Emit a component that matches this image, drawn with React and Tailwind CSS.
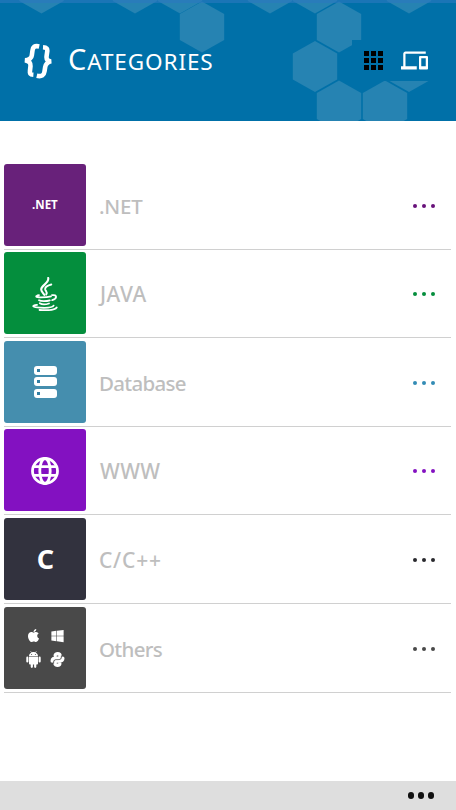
import { FaApple, FaWindows } from 'react-icons/fa'
import { MdDevices } from 'react-icons/md'

// centre points of the header honeycomb
const hexagons = [
  [41.5, -12], [135, -12], [180, -12], [202, 27],
  [270, -12], [315, -12], [409, -12],
  [339, 27], [315, 66.5], [339, 106], [385, 106], [409, 66.5],
]

function Honeycomb() {
  return (
    <svg className="absolute inset-0" width="456" height="121" viewBox="0 0 456 121">
      {hexagons.map(([x, y]) => (
        <polygon
          key={`${x}-${y}`}
          fill="#2683b2"
          points={`${x},${y - 25.5} ${x + 22.2},${y - 13} ${x + 22.2},${y + 13} ${x},${y + 25.5} ${x - 22.2},${y + 13} ${x - 22.2},${y - 13}`}
        />
      ))}
      <rect x="352" y="40" width="84" height="41" fill="#0070a8" />
      <rect width="456" height="3" fill="#2b78c0" opacity="0.6" />
    </svg>
  )
}

function Braces() {
  return (
    <svg width="28" height="36" viewBox="0 0 28 36" fill="none" stroke="#fff" strokeWidth="4.6">
      <path d="M15.2 3.4C10.5 2.4 9 4 8.5 7.5L7.8 12.5C7.5 15 6 16.7 1.2 17.3C5.5 18.5 6.8 20 6.5 23L6 27.5C5.6 30.5 6 31.6 9.4 31.8" />
      <path d="M19 4.2C22.8 4.4 23.6 5.8 23.2 8.8L22.6 13C22.2 16 23 17.8 27 18.4C23.2 19.4 21.6 21 21.2 24L20.5 28.5C20 32 18 34 12.8 32.8" />
    </svg>
  )
}

function Grid() {
  return (
    <div className="grid grid-cols-3 gap-[2px]">
      {[...Array(9).keys()].map((i) => (
        <div key={i} className="h-[5px] w-[5px] bg-black" />
      ))}
    </div>
  )
}

function Java() {
  return (
    <svg className="mt-[1px]" width="26" height="34" viewBox="0 0 26 34" fill="none" stroke="#fff" strokeLinecap="round">
      <path strokeWidth="2.1" d="M16.2 1C17.5 6 9 8.5 9.2 12.5C9.3 14.5 11 15.8 12.3 17.8" />
      <path strokeWidth="1.9" d="M19.3 7.5C15.5 8.5 12.8 10.5 13.2 12.5C13.6 14.2 15.8 14.5 14.2 17.6" />
      <path strokeWidth="1.7" d="M7 18.2C2.5 19 3.5 20.4 9 20.4C13 20.4 16.5 20.1 19 19.4" />
      <path strokeWidth="1.8" d="M20 18.2C25.5 17.2 25.3 21.8 20.2 23.2" />
      <path strokeWidth="1.8" d="M7 23.2C9 24.6 14.5 24.4 17.8 23.3M7.8 26.2C10 27.7 14 27.5 17 26.5" />
      <path strokeWidth="1.8" d="M5 27.8C-1 28.6 0.5 30.4 8 30.7C14.5 31 21 30.5 21.6 28.6M7.5 33C15 33.5 23 33 24.7 30.4" />
    </svg>
  )
}

function Servers() {
  return (
    <div className="flex flex-col gap-[2.5px]">
      {[0, 1, 2].map((i) => (
        <div key={i} className="flex h-[9px] w-[23px] items-center rounded-[3px] bg-white pl-[3px]">
          <div className="h-[3px] w-[3px] bg-[#337fa3]" />
        </div>
      ))}
    </div>
  )
}

function Globe() {
  return (
    <svg className="mt-px mr-px" width="28" height="28" viewBox="0 0 28 28" fill="none" stroke="#fff" strokeWidth="2.8">
      <circle cx="14" cy="14" r="12.5" />
      <ellipse cx="14" cy="14" rx="5.2" ry="12.5" />
      <path d="M3 9.6H25M3 18.4H25" />
    </svg>
  )
}

function Android() {
  return (
    <svg width="15" height="17" viewBox="0 0 15 17" fill="#fff">
      <path d="M3 5.2C3 3.4 4 2.3 5.2 1.7L4.4 0.3L4.8 0L5.7 1.4C6.9 1 8.1 1 9.3 1.4L10.2 0L10.6 0.3L9.8 1.7C11 2.3 12 3.4 12 5.2Z" />
      <path d="M3 5.8H12V12.5Q12 13.4 11.1 13.4H10.3V15.8A1.1 1.1 0 0 1 8.1 15.8V13.4H6.9V15.8A1.1 1.1 0 0 1 4.7 15.8V13.4H3.9Q3 13.4 3 12.5Z" />
      <rect x="0.3" y="5.6" width="2.1" height="6" rx="1.05" />
      <rect x="12.6" y="5.6" width="2.1" height="6" rx="1.05" />
      <circle cx="5.6" cy="3.5" r="0.5" fill="#494949" />
      <circle cx="9.4" cy="3.5" r="0.5" fill="#494949" />
    </svg>
  )
}

function Python() {
  return (
    <svg width="15" height="15" viewBox="0 0 15 15" fill="none" stroke="#fff" strokeWidth="3.4" strokeLinecap="round" strokeLinejoin="round">
      <path d="M5.2 3.6C5.2 1.2 10 1.2 10 3.6C10 6.3 9.4 6.2 6.5 6.2C3.2 6.2 2.2 6.6 2.2 9" />
      <path d="M9.8 11.6C9.8 13.8 5 13.8 5 11.6C5 9 5.6 9 8.5 9C11.8 9 12.8 8.6 12.8 6.2" />
      <path stroke="#494949" strokeWidth="0.9" d="M3.6 11.2C3.6 8 4.4 7.6 7.5 7.6C10.6 7.6 11.4 7.2 11.4 4" />
    </svg>
  )
}

function OtherIcons() {
  return (
    <div className="grid grid-cols-2 place-items-center gap-x-[9px] gap-y-[8px] pt-px text-white">
      <FaApple className="h-[15px] w-[15px]" />
      <FaWindows className="h-[14px] w-[15px]" />
      <Android />
      <Python />
    </div>
  )
}

const categories = [
  { name: '.NET', color: 'bg-[#68217a]', dot: 'bg-[#68117a]', text: 'tracking-[-0.2px]', icon: <span className="mr-px text-[11.5px] font-bold text-white">.NET</span> },
  { name: 'JAVA', color: 'bg-[#048e3d]', dot: 'bg-[#048e3d]', text: 'ml-[1px] text-[21px] tracking-[0.5px]', icon: <Java /> },
  { name: 'Database', color: 'bg-[#458eae]', dot: 'bg-[#338cb5]', text: 'tracking-[-0.7px]', icon: <Servers /> },
  { name: 'WWW', color: 'bg-[#8311c1]', dot: 'bg-[#8311c1]', text: 'ml-[1px] text-[21px] tracking-[0.4px]', icon: <Globe /> },
  { name: 'C/C++', color: 'bg-[#32323e]', dot: 'bg-[#29292e]', text: 'text-[21px] tracking-[0.8px]', icon: <span className="text-[27px] font-bold text-white">C</span> },
  { name: 'Others', color: 'bg-[#494949]', dot: 'bg-[#494949]', text: 'tracking-[-0.7px]', icon: <OtherIcons /> },
]

function Category({ name, color, dot, text, icon }) {
  return (
    <li className="flex h-[88.6px] items-start border-b border-[#d0d0d0]">
      <div className={`mt-[2.7px] ml-[0.4px] flex h-[82px] w-[82px] shrink-0 items-center justify-center rounded-[3px] ${color}`}>
        {icon}
      </div>
      <div className="mt-[2.7px] ml-[12.6px] flex h-[85px] items-center text-[20.5px] font-medium text-[#bebebe]">
        <span className={text}>{name}</span>
      </div>
      <div className="mt-[2.7px] mr-[16px] ml-auto flex h-[84px] items-center gap-[4.8px]">
        <div className={`h-[4px] w-[4px] rounded-full ${dot}`} />
        <div className={`h-[4px] w-[4px] rounded-full ${dot}`} />
        <div className={`h-[4px] w-[4px] rounded-full ${dot}`} />
      </div>
    </li>
  )
}

function App() {
  return (
    <div className="flex h-[810px] w-[456px] flex-col overflow-hidden bg-white font-['Noto_Sans','Open_Sans',sans-serif]">
      <header className="relative h-[121px] shrink-0 overflow-hidden bg-[#0070a8]">
        <Honeycomb />
        <div className="relative flex h-[121px] items-center pl-[24px]">
          <Braces />
          <h1 className="ml-[16px] text-[22.5px] leading-[30px] font-normal tracking-[0.9px] whitespace-nowrap text-white uppercase first-letter:text-[29px]">
            Categories
          </h1>
          <div className="mr-[28.5px] ml-auto flex items-center gap-[18px]">
            <Grid />
            <MdDevices className="h-[27px] w-[27px] text-white" />
          </div>
        </div>
      </header>

      <ul className="mt-[40px] mr-[5px] ml-[4px]">
        {categories.map((c) => (
          <Category key={c.name} {...c} />
        ))}
      </ul>

      <footer className="mt-auto flex h-[29px] shrink-0 items-center justify-end gap-[3.5px] bg-[#dedede] pr-[22px]">
        <div className="h-[6.5px] w-[6.5px] rounded-full bg-[#111]" />
        <div className="h-[6.5px] w-[6.5px] rounded-full bg-[#111]" />
        <div className="h-[6.5px] w-[6.5px] rounded-full bg-[#111]" />
      </footer>
    </div>
  )
}

export default App
